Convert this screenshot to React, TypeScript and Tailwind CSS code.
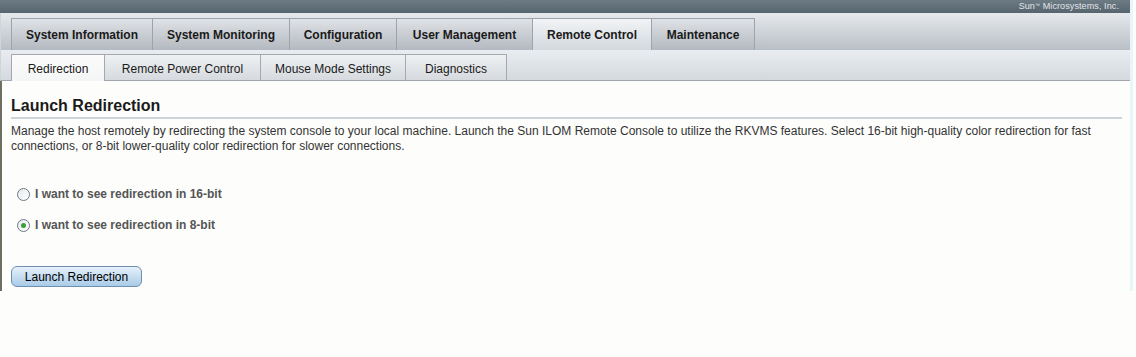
export default function App() {
  const mainTabs = [
    { label: 'System Information', w: 'w-[142px]' },
    { label: 'System Monitoring', w: 'w-[137px]' },
    { label: 'Configuration', w: 'w-[107px]' },
    { label: 'User Management', w: 'w-[136px]' },
    { label: 'Remote Control', w: 'w-[119px]', active: true },
    { label: 'Maintenance', w: 'w-[103px]' },
  ];
  const subTabs = [
    { label: 'Redirection', w: 'w-[94px]', active: true },
    { label: 'Remote Power Control', w: 'w-[156px]' },
    { label: 'Mouse Mode Settings', w: 'w-[145px]' },
    { label: 'Diagnostics', w: 'w-[101px]' },
  ];

  return (
    <div className="w-[1136px] h-[357px] bg-[#fdfdfb] font-['Liberation_Sans',Arial,sans-serif] overflow-hidden">
      <div className="flex flex-col w-[1133px] border-r-[3px] border-[#e8f6fb]">
        {/* Banner */}
        <div className="h-[13px] bg-gradient-to-b from-[#6d7b85] to-[#56646e] flex justify-end items-center pr-[11px]">
          <span className="text-[9px] leading-none text-[#e2e6ea] tracking-[0.1px]">
            Sun<sup className="text-[5px]">™</sup> Microsystems, Inc.
          </span>
        </div>

        {/* Main tabs */}
        <div className="h-[37px] bg-gradient-to-b from-[#e6e9ec] to-[#b9bfc6] flex items-end pl-[10px] border-l border-[#cfd5da]">
          {mainTabs.map((t) => (
            <div
              key={t.label}
              className={
                t.w +
                ' h-[32px] flex items-center justify-center text-[12px] font-bold text-[#1a1a1a] border-t border-r border-[#9ca3aa] first:border-l ' +
                (t.active
                  ? 'bg-gradient-to-b from-[#f2f4f6] to-[#d3d8dd]'
                  : 'bg-gradient-to-b from-[#dfe2e6] to-[#b3b9c0]')
              }
            >
              {t.label}
            </div>
          ))}
        </div>

        {/* Sub tabs */}
        <div className="h-[31px] bg-gradient-to-b from-[#e9edf1] to-[#d4d9de] flex items-end pl-[10px] border-b border-[#9ea5ab] border-l border-l-[#cfd5da]">
          {subTabs.map((t) => (
            <div
              key={t.label}
              className={
                t.w +
                ' flex items-center justify-center pt-[2px] text-[12px] text-[#1a1a1a] border-t border-r border-[#a3a9ae] first:border-l ' +
                (t.active
                  ? 'bg-gradient-to-b from-[#fbfbfb] to-[#f4f5f5] h-[27px] -mb-px'
                  : 'bg-gradient-to-b from-[#eef1f3] to-[#d6dade] h-[26px]')
              }
            >
              {t.label}
            </div>
          ))}
        </div>

        {/* Content */}
        <div className="border-l-2 border-[#6e6e62] h-[210px] pl-[9px] pr-[8px]">
          <h1 className="pt-[15px] text-[16px] leading-[20px] font-bold text-[#1a1a1a] pb-[1px] border-b-2 border-[#cdd3da]">
            Launch Redirection
          </h1>
          <p className="mt-[5px] text-[12px] leading-[15px] text-[#333]">
            Manage the host remotely by redirecting the system console to your local machine. Launch the Sun ILOM Remote Console to utilize the RKVMS features. Select 16-bit high-quality color redirection for fast connections, or 8-bit lower-quality color redirection for slower connections.
          </p>

          <div className="mt-[31px] flex flex-col gap-[13px] pl-[6px]">
            <label className="flex items-center gap-[5px] text-[12px] font-bold text-[#555]">
              <span className="w-[13px] h-[13px] rounded-full border border-[#6d7a86] bg-gradient-to-br from-[#e6e9ec] to-white" />
              I want to see redirection in 16-bit
            </label>
            <label className="flex items-center gap-[5px] text-[12px] font-bold text-[#555]">
              <span className="w-[13px] h-[13px] rounded-full border border-[#6d7a86] bg-gradient-to-br from-[#e6e9ec] to-white flex items-center justify-center">
                <span className="w-[5px] h-[5px] rounded-full bg-[#3aa03a]" />
              </span>
              I want to see redirection in 8-bit
            </label>
          </div>

          <button className="mt-[32px] w-[131px] h-[21px] rounded-[6px] border border-[#6e8fae] bg-gradient-to-b from-[#e6f1fa] to-[#a9cbe8] text-[12px] text-black leading-none">
            Launch Redirection
          </button>
        </div>
      </div>
    </div>
  );
}
